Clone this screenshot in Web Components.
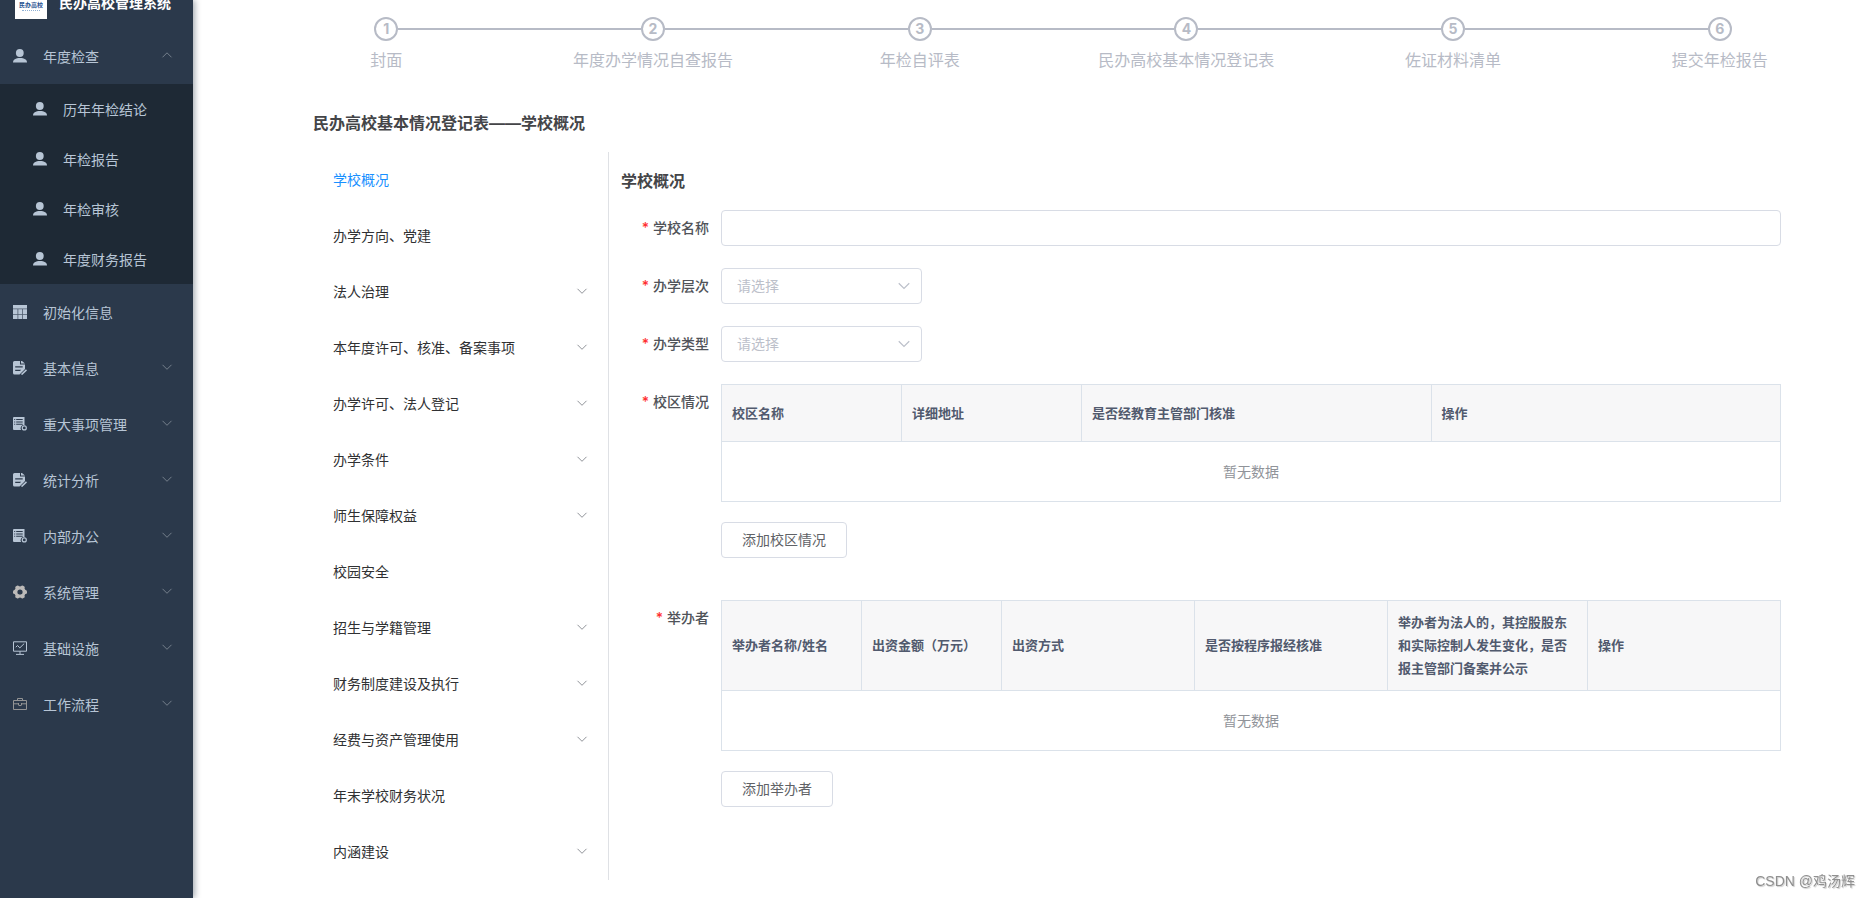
<!DOCTYPE html>
<html lang="zh-CN">
<head>
<meta charset="utf-8">
<meta name="viewport" content="width=device-width, initial-scale=1">
<title>民办高校管理系统</title>
<style>
  html, body { margin: 0; min-height: 100vh; }
  body {
    background: #fff;
    color: #303133;
    font: 14px/20px Inter, "Noto Sans CJK SC", sans-serif;
  }
</style>
</head>
<body>
<school-app></school-app>

<script>
const make = (host, html) => { host.attachShadow({ mode: 'open' }).innerHTML = html; };

/* ---------- icons ---------- */
const ICONS = {
  user: '<g fill="currentColor"><circle cx="6.8" cy="4" r="3.9"/><path d="M0 13.6C0 10.600 2.600 9 7 9s7 1.600 7 4.600z"/></g>',
  grid: '<path fill="currentColor" opacity=".25" d="M0 0h14v14H0z"/><path fill="currentColor" d="M0 0h14v3.400H0zM0 4.200h4.500v4.800H0zM5.300 4.200h3.900v4.800H5.300zM10 4.200h4v4.800h-4zM0 9.800h4.500V14H0zM5.300 9.800h3.900V14H5.300zM10 9.800h4V14h-4z"/>',
  edit: '<path fill="currentColor" fill-rule="evenodd" d="M1.500 0H7v3.500h5V8L6.500 13.500H1.500Q0 13.500 0 12V1.500Q0 0 1.500 0zM2.200 5.200v1.200h7.500V5.200zM2.200 8.800V10H7l1.200-1.200z"/><path fill="currentColor" d="M8 0h1l3 2.600H8z"/><path d="M8.500 13.600l5-4.700" stroke="currentColor" stroke-width="1.500" fill="none"/>',
  list: '<path fill="currentColor" fill-rule="evenodd" d="M1 0h10.500v8.200a3.200 3.200 0 0 0-3.400 4.900H1Q0 13.100 0 12V1q0-1 1-1zM1.200 2v1h1V2zM3.200 2v1h6.500V2zM1.200 4.400v1h1v-1zM3.200 4.400v1h6.500v-1zM1.200 6.800v1h1v-1zM3.200 6.800v1h6.500v-1z"/><circle cx="11.300" cy="10.900" r="2" fill="none" stroke="currentColor" stroke-width="1.200"/>',
  gear: `<g fill="#bcbab8"><circle cx="7" cy="7" r="4.200" fill="none" stroke="#bcbab8" stroke-width="3.200"/>${[0, 60, 120, 180, 240, 300].map(a => `<rect x="10" y="5" width="4" height="4" rx="1.500" transform="rotate(${a} 7 7)"/>`).join('')}</g>`,
  monitor: '<g fill="none" stroke="currentColor"><path d="M.5.800h13v9.400H.5zM7 10.200v2.900M3 13.400h8"/><path d="M2.800 6.200l1.800-1.700 2.200 2.400 4.400-4.300"/></g>',
  bag: '<g fill="none" stroke="#949494"><path d="M.5 3.500h13v9H.5zM4.500 3.500v-2h5v2M.5 6.800h4.800M8.700 6.800h4.800M5.500 6v2.200q1.500 1 3 0V6"/></g>',
};
customElements.define('app-icon', class extends HTMLElement {
  constructor() {
    super();
    make(this, `<style>:host{display:block;width:14px;height:14px;flex:none}svg{display:block}</style>
      <svg width="14" height="14" viewBox="0 0 14 14" aria-hidden="true">${ICONS[this.getAttribute('name')]}</svg>`);
  }
});
customElements.define('app-arrow', class extends HTMLElement {
  constructor() {
    super();
    const d = this.hasAttribute('up') ? 'M1.500 7.300L6 2.800l4.500 4.500' : 'M1.500 2.800L6 7.300 10.500 2.800';
    make(this, `<style>:host{display:block;width:12px;height:12px;flex:none;color:#909399}svg{display:block;width:100%;height:100%}</style>
      <svg viewBox="0 0 12 12" aria-hidden="true"><path d="${d}" fill="none" stroke="currentColor"/></svg>`);
  }
});

/* ---------- sidebar ---------- */
customElements.define('side-brand', class extends HTMLElement {
  constructor() {
    super();
    make(this, `<style>
      :host{display:flex;align-items:flex-end;height:28px;overflow:hidden;padding-left:15px}
      a{display:flex;align-items:center;gap:12px;height:50px;color:#fff;text-decoration:none;font-weight:600;white-space:nowrap}
      .logo{box-sizing:border-box;display:flex;flex-direction:column;align-items:center;width:32px;height:32px;padding-top:14px;background:#fff;color:#1f4f8f;font-size:6px;line-height:8px;font-weight:700}
      .logo i{width:18px;margin-top:1px;border-top:1px dotted #8fb0d4}
    </style>
    <a href="#"><span class="logo"><span>民办高校</span><i></i></span><span>民办高校管理系统</span></a>`);
  }
});
customElements.define('side-item', class extends HTMLElement {
  constructor() {
    super();
    const arrow = this.getAttribute('arrow');
    make(this, `<style>
      :host{display:block}
      a{display:flex;align-items:center;gap:16px;height:56px;padding:0 20px 0 13px;color:#b7c5d5;text-decoration:none;white-space:nowrap}
      :host([sub]) a{height:50px;padding-left:33px}
      .t{flex:1;padding-top:2px}
      app-arrow{color:#75808c}
    </style>
    <a href="#"><app-icon name="${this.getAttribute('icon')}"></app-icon><span class="t"><slot></slot></span>${arrow ? `<app-arrow ${arrow}></app-arrow>` : ''}</a>`);
  }
});
customElements.define('side-bar', class extends HTMLElement {
  constructor() {
    super();
    make(this, `<style>
      :host{display:block;width:193px;flex:none;background:#2b394b;box-shadow:2px 0 6px rgba(0,21,41,.35)}
      .sub{background:#1e2935}
    </style>
    <side-brand></side-brand>
    <nav aria-label="主菜单">
      <side-item icon="user" arrow="up">年度检查</side-item>
      <div class="sub">
        <side-item sub icon="user">历年年检结论</side-item>
        <side-item sub icon="user">年检报告</side-item>
        <side-item sub icon="user">年检审核</side-item>
        <side-item sub icon="user">年度财务报告</side-item>
      </div>
      <side-item icon="grid">初始化信息</side-item>
      <side-item icon="edit" arrow="down">基本信息</side-item>
      <side-item icon="list" arrow="down">重大事项管理</side-item>
      <side-item icon="edit" arrow="down">统计分析</side-item>
      <side-item icon="list" arrow="down">内部办公</side-item>
      <side-item icon="gear" arrow="down">系统管理</side-item>
      <side-item icon="monitor" arrow="down">基础设施</side-item>
      <side-item icon="bag" arrow="down">工作流程</side-item>
    </nav>`);
  }
});

/* ---------- steps ---------- */
customElements.define('step-bar', class extends HTMLElement {
  constructor() {
    super();
    const steps = ['封面', '年度办学情况自查报告', '年检自评表', '民办高校基本情况登记表', '佐证材料清单', '提交年检报告'];
    make(this, `<style>
      :host{display:block;padding:17px 17px 0 60px;color:#b7bbc6}
      ol{display:flex;margin:0;padding:0;list-style:none}
      li{flex:1;min-width:0;text-align:center;font-size:16px;line-height:38px}
      .head{display:flex;align-items:center}
      .head::before,.head::after{content:"";flex:1;height:2px;background:#b7bbc6}
      li:first-child .head::before,li:last-child .head::after{background:none}
      .no{box-sizing:border-box;width:24px;height:24px;border:2px solid;border-radius:50%;font-size:14px;line-height:20px;font-weight:700}
    </style>
    <ol>${steps.map((s, i) => `<li><div class="head"><span class="no">${i + 1}</span></div><div>${s}</div></li>`).join('')}</ol>`);
  }
});

/* ---------- section menu ---------- */
customElements.define('section-menu', class extends HTMLElement {
  constructor() {
    super();
    const rows = ['学校概况', '办学方向、党建', '法人治理+', '本年度许可、核准、备案事项+', '办学许可、法人登记+', '办学条件+', '师生保障权益+', '校园安全', '招生与学籍管理+', '财务制度建设及执行+', '经费与资产管理使用+', '年末学校财务状况', '内涵建设+'];
    make(this, `<style>
      :host{display:block;box-sizing:border-box;width:296px;flex:none;border-right:1px solid #dfe1e5}
      a{display:flex;align-items:center;justify-content:space-between;height:56px;padding:0 20px;color:#303133;text-decoration:none}
      a[aria-current]{color:#1890ff}
    </style>
    <nav aria-label="登记表章节">${rows.map((r, i) => `<a href="#"${i ? '' : ' aria-current="page"'}><span>${r.replace('+', '')}</span>${r.endsWith('+') ? '<app-arrow></app-arrow>' : ''}</a>`).join('')}</nav>`);
  }
});

/* ---------- form ---------- */
const FIELD = `
  :host{display:grid;grid-template-columns:100px minmax(0,1fr);margin-bottom:22px}
  label,.label{padding-right:12px;text-align:right;line-height:36px;font-weight:500;color:#505359}
  label::before,.label::before{content:"*";margin-right:4px;color:#ff3030}
`;
customElements.define('text-field', class extends HTMLElement {
  constructor() {
    super();
    make(this, `<style>${FIELD}
      input{box-sizing:border-box;width:100%;height:36px;padding:0 15px;border:1px solid #d8dce5;border-radius:4px;background:#fff;font:inherit;color:#606266;outline:none}
    </style><label for="f">${this.getAttribute('label')}</label><input id="f" type="text">`);
  }
});
customElements.define('select-field', class extends HTMLElement {
  constructor() {
    super();
    make(this, `<style>${FIELD}
      .box{display:grid;align-items:center;width:201px}
      select,app-arrow{grid-area:1/1}
      select{appearance:none;width:100%;height:36px;padding:0 30px 0 15px;border:1px solid #d8dce5;border-radius:4px;background:#fff;font:inherit;color:#bcc0ca;outline:none}
      app-arrow{justify-self:end;width:14px;height:14px;margin-right:11px;padding-top:2px;color:#bcc0ca;pointer-events:none}
    </style><label for="f">${this.getAttribute('label')}</label>
    <div class="box"><select id="f"><option>请选择</option></select><app-arrow></app-arrow></div>`);
  }
});
customElements.define('table-field', class extends HTMLElement {
  constructor() {
    super();
    const cols = this.getAttribute('cols').split('|').map(c => c.split(':'));
    make(this, `<style>${FIELD}
      :host{margin-bottom:42px}
      table{width:100%;table-layout:fixed;border-collapse:collapse}
      th,td{border:1px solid #dbe2ea}
      th{box-sizing:border-box;height:57px;padding:10px;background:#f7f7f8;color:#515a6e;font-size:13px;line-height:23px;font-weight:600;text-align:left}
      td{height:59px;padding:0;text-align:center;color:#909399}
      button{height:36px;margin-top:20px;padding:0 20px;border:1px solid #d8dce5;border-radius:4px;background:#fff;font:inherit;font-weight:400;color:#606266}
    </style>
    <span class="label" id="l">${this.getAttribute('label')}</span>
    <div>
      <table aria-labelledby="l">
        <colgroup>${cols.map(c => `<col${c[1] ? ` style="width:${c[1]}px"` : ''}>`).join('')}</colgroup>
        <thead><tr>${cols.map(c => `<th scope="col">${c[0]}</th>`).join('')}</tr></thead>
        <tbody><tr><td colspan="${cols.length}">暂无数据</td></tr></tbody>
      </table>
      <button type="button">${this.getAttribute('action')}</button>
    </div>`);
  }
});
customElements.define('school-form', class extends HTMLElement {
  constructor() {
    super();
    make(this, `<style>
      :host{display:block;flex:1;min-width:0;padding:16px 0 0 12px}
      h2{margin:0 0 16px;font-size:16px;line-height:26px;font-weight:600;color:#444548}
    </style>
    <h2>学校概况</h2>
    <form>
      <text-field label="学校名称"></text-field>
      <select-field label="办学层次"></select-field>
      <select-field label="办学类型"></select-field>
      <table-field label="校区情况" action="添加校区情况" cols="校区名称:180|详细地址:180|是否经教育主管部门核准|操作"></table-field>
      <table-field label="举办者" action="添加举办者" cols="举办者名称/姓名:140|出资金额（万元）:140|出资方式|是否按程序报经核准|举办者为法人的，其控股股东和实际控制人发生变化，是否报主管部门备案并公示:200|操作"></table-field>
    </form>`);
  }
});

/* ---------- page ---------- */
customElements.define('school-app', class extends HTMLElement {
  constructor() {
    super();
    make(this, `<style>
      :host{display:flex;min-height:100vh}
      main{flex:1;min-width:0}
      .content{padding:0 89px 0 120px}
      h1{margin:0;padding:32px 0 17px;font-size:16px;line-height:24px;font-weight:600;color:#444548}
      .cols{display:flex}
      .mark{position:fixed;right:15px;bottom:7px;font-family:"Liberation Sans","Noto Sans CJK SC",sans-serif;color:#909090;text-shadow:1px 1px 1px #ccc}
    </style>
    <side-bar></side-bar>
    <main>
      <step-bar></step-bar>
      <div class="content">
        <h1>民办高校基本情况登记表——学校概况</h1>
        <div class="cols"><section-menu></section-menu><school-form></school-form></div>
      </div>
    </main>
    <div class="mark">CSDN @鸡汤辉</div>`);
  }
});
</script>
</body>
</html>
